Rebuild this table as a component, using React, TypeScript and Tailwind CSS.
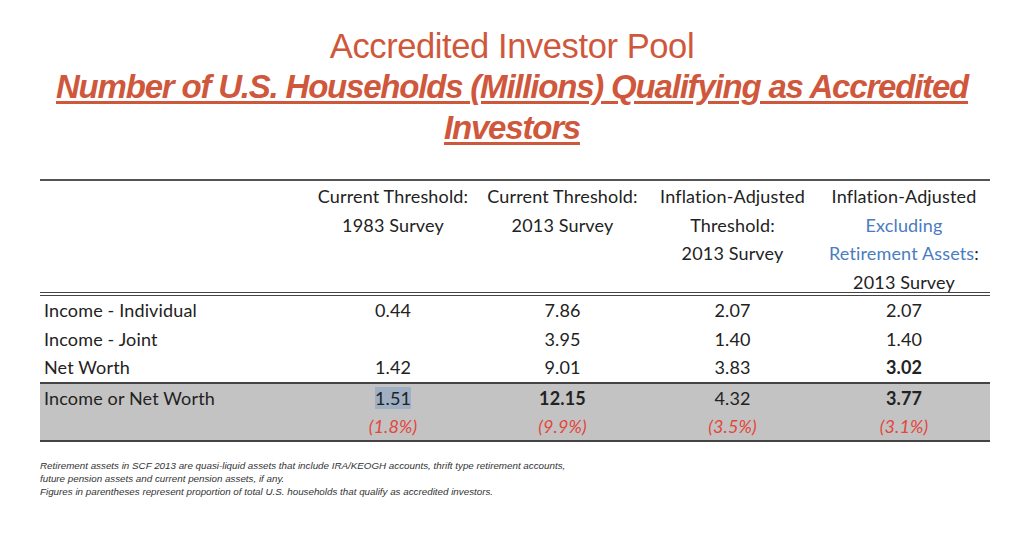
import React from "react";

const cal = { fontFamily: "Lato, 'Open Sans', sans-serif" };

function Row({
  label,
  cells,
  className = "",
}: {
  label: React.ReactNode;
  cells: React.ReactNode[];
  className?: string;
}) {
  return (
    <div className={`grid grid-cols-[268px_170px_169px_171px_172px] items-center ${className}`}>
      <div className="pl-[4px]">{label}</div>
      {cells.map((c, i) => (
        <div key={i} className="text-center">
          {c}
        </div>
      ))}
    </div>
  );
}

export default function App() {
  const red = "text-[#e4463b] italic";
  return (
    <div className="w-[1024px] h-[533px] bg-white overflow-hidden">
      <div
        className="flex flex-col items-center text-[#cf583c] pt-[27px]"
        style={{ fontFamily: "'Liberation Sans', Arial, sans-serif" }}
      >
        <div className="text-[34.5px] leading-[38px] tracking-[-0.4px]">Accredited Investor Pool</div>
        <div className="mt-[1px] text-center text-[33px] leading-[41px] font-bold italic underline decoration-[2.5px] underline-offset-[3px] tracking-[-1.2px] whitespace-nowrap">
          Number of U.S. Households (Millions) Qualifying as Accredited
          <br />
          Investors
        </div>
      </div>

      <div className="ml-[40px] w-[950px] mt-[31px] text-[#222] text-[18px] tracking-[0.15px]" style={cal}>
        <div className="border-t-2 border-[#555]" />
        <div className="h-[111px] pt-[1px] leading-[28.7px]">
          <Row
            label=""
            cells={[
              <div key="a">
                Current Threshold:
                <br />
                1983 Survey
              </div>,
              <div key="b">
                Current Threshold:
                <br />
                2013 Survey
              </div>,
              <div key="c">
                Inflation-Adjusted
                <br />
                Threshold:
                <br />
                2013 Survey
              </div>,
              <div key="d">
                Inflation-Adjusted
                <br />
                <span className="text-[#4a7cc0]">Excluding</span>
                <br />
                <span className="text-[#4a7cc0]">Retirement Assets</span>:
                <br />
                2013 Survey
              </div>,
            ]}
            className="items-start"
          />
        </div>
        <div className="border-b-4 border-double border-[#444]" />
        <div className="leading-[28.5px]">
          <Row label="Income - Individual" cells={["0.44", "7.86", "2.07", "2.07"]} />
          <Row label="Income - Joint" cells={["", "3.95", "1.40", "1.40"]} />
          <Row label="Net Worth" cells={["1.42", "9.01", "3.83", <b key="x">3.02</b>]} />
        </div>
        <div className="border-t-2 border-[#444] bg-[#c3c3c3] border-b-2 leading-[28px]">
          <Row
            label="Income or Net Worth"
            cells={[
              <span key="a" className="bg-[#9fb0c4]">1.51</span>,
              <b key="b">12.15</b>,
              "4.32",
              <b key="d">3.77</b>,
            ]}
          />
          <Row
            label=""
            cells={[
              <span key="a" className={red}>(1.8%)</span>,
              <span key="b" className={red}>(9.9%)</span>,
              <span key="c" className={red}>(3.5%)</span>,
              <span key="d" className={red}>(3.1%)</span>,
            ]}
          />
        </div>
      </div>

      <div
        className="ml-[40px] mt-[17px] text-[9.8px] leading-[13px] italic text-[#333]"
        style={{ fontFamily: "'Liberation Sans', Arial, sans-serif" }}
      >
        <div>
          Retirement assets in SCF 2013 are quasi-liquid assets that include IRA/KEOGH accounts, thrift type retirement accounts,
        </div>
        <div>future pension assets and current pension assets, if any.</div>
        <div>Figures in parentheses represent proportion of total U.S. households that qualify as accredited investors.</div>
      </div>
    </div>
  );
}
